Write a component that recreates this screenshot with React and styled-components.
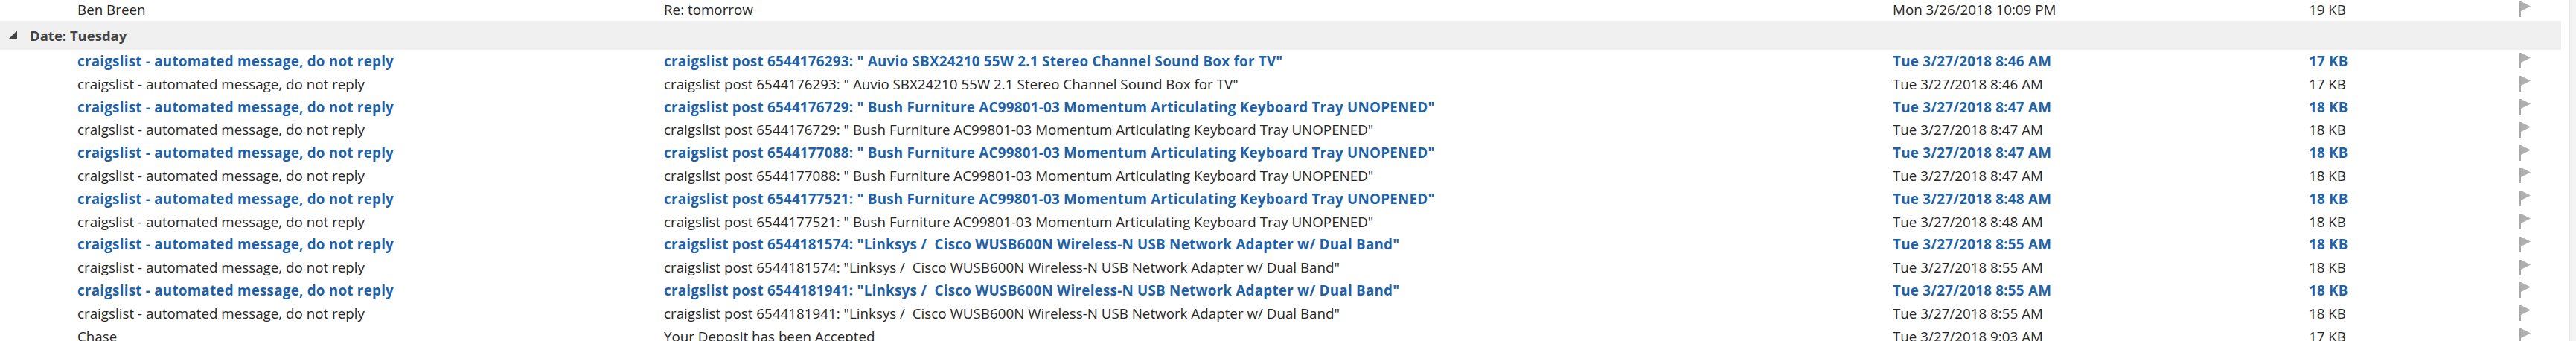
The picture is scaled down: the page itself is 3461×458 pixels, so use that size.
import React from "react";
import styled, { createGlobalStyle } from "styled-components";

//---------------------- DATA -------------------------------
const BUSH = `" Bush Furniture AC99801-03 Momentum Articulating Keyboard Tray UNOPENED"`;
const LINKSYS = `"Linksys /  Cisco WUSB600N Wireless-N USB Network Adapter w/ Dual Band"`;
const CL = "craigslist - automated message, do not reply";

const pair = (post, title, time, size) => [
    { from: CL, subject: `craigslist post ${post}: ${title}`, date: `Tue 3/27/2018 ${time}`, size, unread: true },
    { from: CL, subject: `craigslist post ${post}: ${title}`, date: `Tue 3/27/2018 ${time}`, size },
];

const tuesday = [
    ...pair("6544176293", `" Auvio SBX24210 55W 2.1 Stereo Channel Sound Box for TV"`, "8:46 AM", "17 KB"),
    ...pair("6544176729", BUSH, "8:47 AM", "18 KB"),
    ...pair("6544177088", BUSH, "8:47 AM", "18 KB"),
    ...pair("6544177521", BUSH, "8:48 AM", "18 KB"),
    ...pair("6544181574", LINKSYS, "8:55 AM", "18 KB"),
    ...pair("6544181941", LINKSYS, "8:55 AM", "18 KB"),
    { from: "Chase", subject: "Your Deposit has been Accepted", date: "Tue 3/27/2018 9:03 AM", size: "17 KB" },
];

//---------------------- COMPONENT --------------------------
const Flag = () => (
    <FlagIcon width="16" height="22" viewBox="0 0 16 22">
        <rect x="0" y="0" width="2" height="21" fill="#a8a8a8" />
        <polygon points="2,0 15,6.5 2,13" fill="#b0b0b0" />
    </FlagIcon>
);

const MailRow = ({ mail }) => (
    <Row $unread={mail.unread}>
        <span />
        <Cell>{mail.from}</Cell>
        <Cell>{mail.subject}</Cell>
        <Cell>{mail.date}</Cell>
        <Cell>{mail.size}</Cell>
        <FlagCell><Flag /></FlagCell>
    </Row>
);

const App = () => {
    return (
        <>
            <GlobalStyle />
            <Window>
                <List>
                    <MailRow mail={{ from: "Ben Breen", subject: "Re: tomorrow", date: "Mon 3/26/2018 10:09 PM", size: "19 KB" }} />
                    <GroupHeader>
                        <Caret width="12" height="12" viewBox="0 0 12 12">
                            <polygon points="11,0 11,11 0,11" fill="#444" />
                        </Caret>
                        <GroupTitle>Date: Tuesday</GroupTitle>
                    </GroupHeader>
                    {tuesday.map((m, i) => <MailRow key={i} mail={m} />)}
                </List>
                <ScrollTrack />
            </Window>
        </>
    );
};
export default App;

//----------------------- STYLE -----------------------------
const GlobalStyle = createGlobalStyle`
    body {
        margin: 0;
        background: #ffffff;
        overflow: hidden;
    }
`;
const Window = styled.div`
    display: flex;
    width: 3461px;
    height: 458px;
    overflow: hidden;
    background: #ffffff;
    font-family: "Open Sans", "Noto Sans", sans-serif;
`;
const List = styled.div`
    display: flex;
    flex-direction: column;
    width: 3441px;
    margin-top: -2.4px;
`;
const Row = styled.div`
    display: grid;
    grid-template-columns: 104px 788px 1651px 559px 283px 56px;
    align-items: center;
    height: 30.8px;
    flex-shrink: 0;
    font-size: 18.8px;
    font-weight: ${p => (p.$unread ? 700 : 400)};
    letter-spacing: ${p => (p.$unread ? "0.25px" : "0")};
    color: ${p => (p.$unread ? "#1d62a8" : "#262626")};
`;
const Cell = styled.div`
    white-space: pre;
    overflow: hidden;
    line-height: 30.8px;
`;
const FlagCell = styled.div`
    display: flex;
    align-items: center;
    height: 100%;
`;
const FlagIcon = styled.svg`
    display: block;
`;
const GroupHeader = styled.div`
    display: flex;
    align-items: center;
    height: 38.6px;
    flex-shrink: 0;
    background: #f0f0f0;
    padding-left: 12px;
`;
const Caret = styled.svg`
    display: block;
    margin-top: -2px;
`;
const GroupTitle = styled.span`
    margin-left: 16px;
    font-size: 18.5px;
    font-weight: 700;
    color: #444444;
`;
const ScrollTrack = styled.div`
    width: 20px;
    border-left: 11px solid #ffffff;
    background: #f4f4f4;
    box-shadow: inset 1px 0 0 #e4e4e4;
`;
